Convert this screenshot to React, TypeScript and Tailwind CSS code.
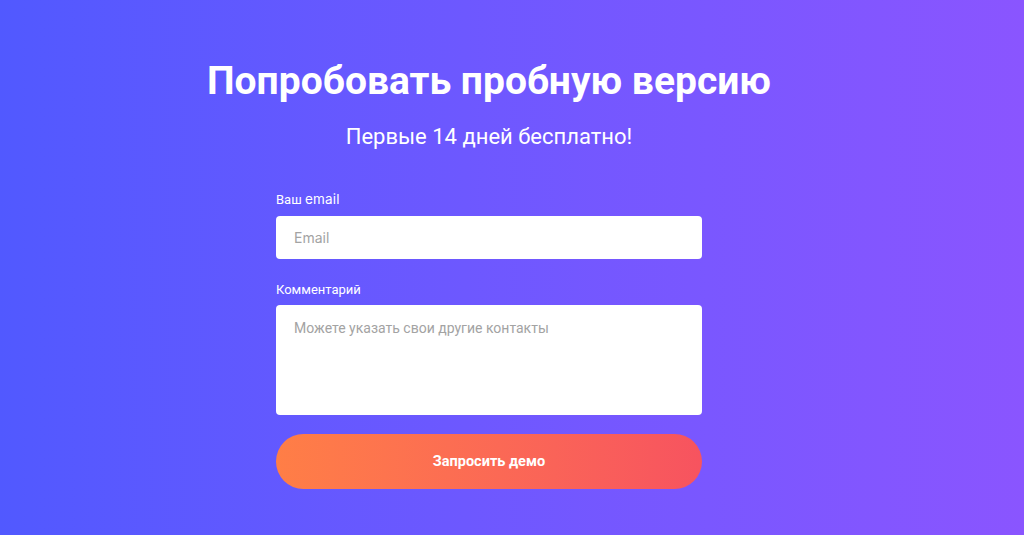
export default function App() {
  return (
    <div className="min-h-[535px] w-full bg-gradient-to-r from-[#5159ff] to-[#8a55ff] pr-[46px] flex flex-col items-center font-['Roboto',sans-serif] text-white">
      <h1 className="mt-[56px] text-[39px] font-bold leading-[50px]">Попробовать пробную версию</h1>
      <p className="mt-[16px] text-[22px] leading-[30px] font-normal">Первые 14 дней бесплатно!</p>

      <form className="mt-[38px] w-[426px] flex flex-col" onSubmit={(e) => e.preventDefault()}>
        <label className="text-[13px] leading-[18px]">
          Ваш <span className="font-['Inter',sans-serif] text-[13.5px] tracking-[0.2px]">email</span>
        </label>
        <input
          className="mt-[7px] h-[43px] rounded-[4px] bg-white px-[18px] text-[14px] text-gray-700 placeholder:text-[#a3a3a3] outline-none font-['Inter',sans-serif]"
          placeholder="Email"
        />
        <label className="mt-[22px] text-[13px] leading-[18px]">Комментарий</label>
        <textarea
          className="mt-[6px] h-[110px] resize-none rounded-[4px] bg-white px-[18px] py-[13px] text-[14px] text-gray-700 placeholder:text-[#a3a3a3] outline-none"
          placeholder="Можете указать свои другие контакты"
        />
        <button className="mt-[19px] h-[55px] rounded-full bg-gradient-to-r from-[#ff7e46] to-[#f7535f] text-[14.5px] font-bold text-white">
          Запросить демо
        </button>
      </form>
    </div>
  );
}
